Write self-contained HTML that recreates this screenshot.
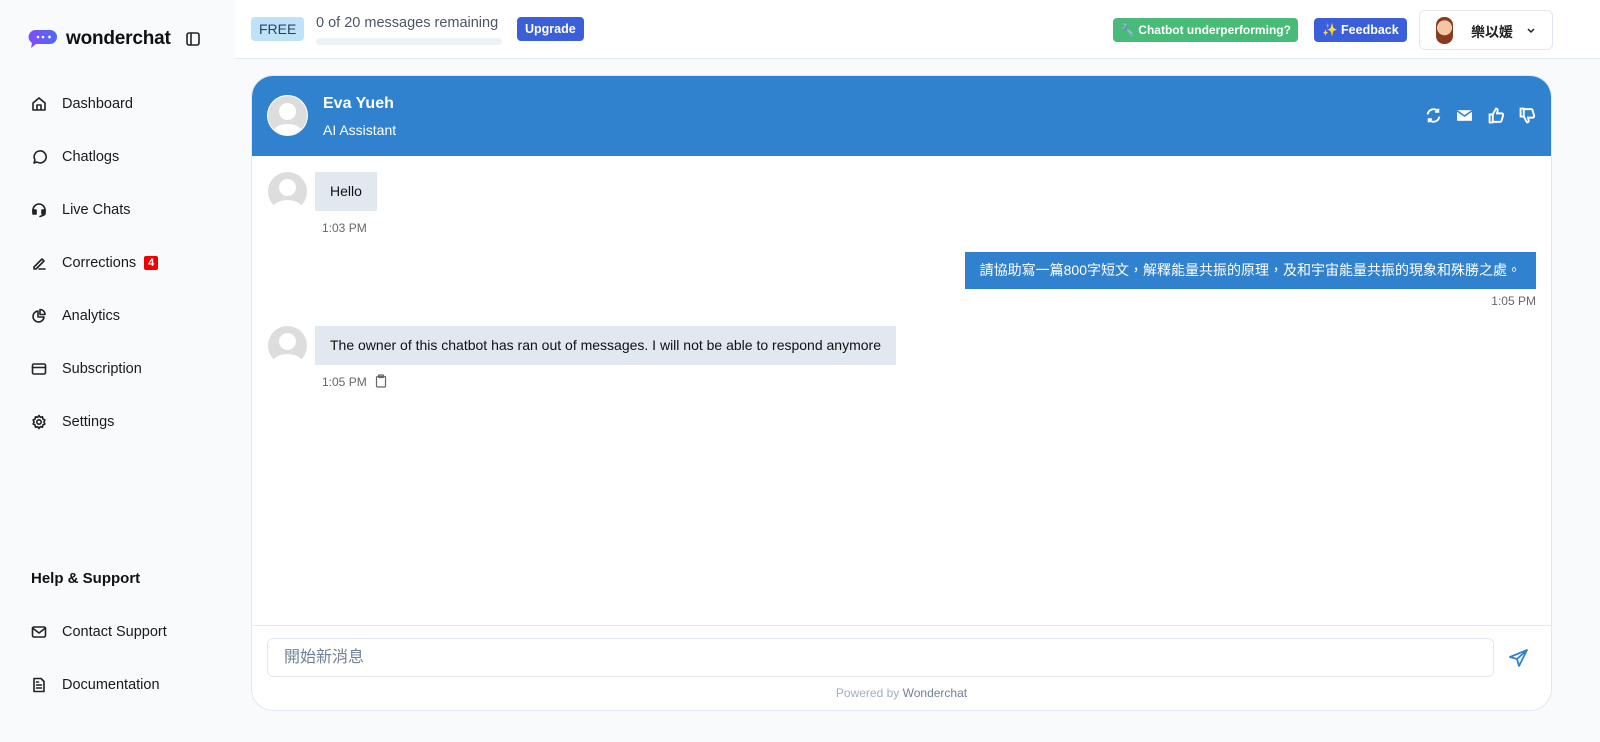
<!DOCTYPE html>
<html><head><meta charset="utf-8"><style>
*{box-sizing:border-box;margin:0;padding:0}
body{width:1600px;height:742px;overflow:hidden;font-family:"Liberation Sans","Noto Sans CJK TC",sans-serif;background:#f8fafc;position:relative;color:#111}
.side{position:absolute;left:0;top:0;width:235px;height:742px;background:#f8fafc}
.logo{position:absolute;left:28px;top:28px;display:flex;align-items:center}
.logo b{font-size:19px;margin-left:8px;color:#111;letter-spacing:-0.2px}
.nav{position:absolute;left:31px;display:flex;align-items:center;font-size:14.5px;color:#1a1a1a}
.nav svg{width:16px;height:16px;margin-right:15px;fill:none;stroke:#222;stroke-width:1.6;stroke-linecap:round;stroke-linejoin:round}
.badge{background:#e00;color:#fff;font-size:11px;font-weight:bold;padding:1px 4px;border-radius:2px;margin-left:8px}
.top{position:absolute;left:235px;top:0;width:1365px;height:59px;background:#fff;border-bottom:1px solid #e2e8f0}
.card{position:absolute;left:251px;top:75px;width:1301px;height:636px;background:#fff;border:1px solid #e2e8f0;border-radius:22px;overflow:hidden}
.hdr{height:80px;background:#3182ce;color:#fff;position:relative}
.av{position:absolute;width:39px;height:39px;border-radius:50%;background:#ddd;overflow:hidden}
.av:before{content:"";position:absolute;left:11px;top:7px;width:17px;height:17px;border-radius:50%;background:#fff}
.av:after{content:"";position:absolute;left:4px;top:28px;width:31px;height:20px;border-radius:50%;background:#fff}
.bub{position:absolute;background:#e2e8f0;font-size:14px;color:#111;padding:0 15px;height:39px;line-height:39px}
.ts{position:absolute;font-size:12px;color:#666}
.hi svg{width:17px;height:17px;fill:none;stroke:#fff;stroke-width:1.8;position:absolute;top:31px}
</style></head><body>
<div class="side">
 <div class="logo"><svg width="30" height="22" viewBox="0 0 30 22"><defs><linearGradient id="g" x1="0" x2="1"><stop offset="0" stop-color="#7c4dff"/><stop offset="1" stop-color="#4f6bf0"/></linearGradient></defs><path d="M8 2h14a7 7 0 0 1 0 14H8l-5 4 1-5A7 7 0 0 1 8 2z" fill="url(#g)"/><circle cx="10" cy="9" r="1.3" fill="#fff"/><circle cx="15" cy="9" r="1.3" fill="#fff"/><path d="M20 9h3M21.5 7.5v3" stroke="#fff" stroke-width="1.3"/></svg><b>wonderchat</b>
 <svg style="margin-left:15px" width="14" height="14" viewBox="0 0 14 14" fill="none" stroke="#222" stroke-width="1.6"><rect x="1" y="1" width="12" height="12" rx="2"/><path d="M5 1v12"/></svg></div>
 <div class="nav" style="top:96px"><svg viewBox="0 0 16 16"><path d="M2 7l6-5 6 5v7H2zM6 14V9h4v5"/></svg>Dashboard</div>
 <div class="nav" style="top:149px"><svg viewBox="0 0 16 16"><path d="M3 14l1-3a6 6 0 1 1 2 2z"/></svg>Chatlogs</div>
 <div class="nav" style="top:202px"><svg viewBox="0 0 16 16"><path d="M2 10V8a6 6 0 0 1 12 0v2"/><rect x="2" y="8" width="3" height="4" fill="#222"/><rect x="11" y="8" width="3" height="4" fill="#222"/><path d="M13 12v1l-4 1.5"/></svg>Live Chats</div>
 <div class="nav" style="top:255px"><svg viewBox="0 0 16 16"><path d="M3 12l8-8 2 2-8 8H3zM8 14h6"/></svg>Corrections<span class="badge">4</span></div>
 <div class="nav" style="top:308px"><svg viewBox="0 0 16 16"><path d="M7 3a5.5 5.5 0 1 0 6 6H7z M9 1.5v5h5a5 5 0 0 0-5-5z"/></svg>Analytics</div>
 <div class="nav" style="top:361px"><svg viewBox="0 0 16 16"><rect x="1.5" y="3" width="13" height="10" rx="1.5"/><path d="M1.5 6.5h13"/></svg>Subscription</div>
 <div class="nav" style="top:414px"><svg viewBox="0 0 16 16"><circle cx="8" cy="8" r="2.2"/><path d="M8 1.5l1.3 1.8 2.2-.5.4 2.2 2 1-1 2 1 2-2 1-.4 2.2-2.2-.5L8 14.5l-1.3-1.8-2.2.5-.4-2.2-2-1 1-2-1-2 2-1 .4-2.2 2.2.5z"/></svg>Settings</div>
 <div style="position:absolute;left:31px;top:570px;font-size:15px;font-weight:bold">Help &amp; Support</div>
 <div class="nav" style="top:624px"><svg viewBox="0 0 16 16"><rect x="1.5" y="3" width="13" height="10" rx="1.5"/><path d="M1.5 4l6.5 5 6.5-5"/></svg>Contact Support</div>
 <div class="nav" style="top:677px"><svg viewBox="0 0 16 16"><path d="M3 1.5h7l3 3v10H3zM5.5 8h5M5.5 11h5M5.5 5h2"/></svg>Documentation</div>
</div>
<div class="top">
 <div style="position:absolute;left:16px;top:17px;background:#bee3f8;color:#2a4365;font-size:14px;padding:0 8px;height:24px;line-height:24px;border-radius:4px">FREE</div>
 <div style="position:absolute;left:81px;top:15px;font-size:14.5px;color:#4a5568">0 of 20 messages remaining</div>
 <div style="position:absolute;left:81px;top:38px;width:186px;height:7px;background:#edf2f7;border-radius:4px"></div>
 <div style="position:absolute;left:282px;top:17px;background:#3b5fd9;color:#fff;font-size:12.5px;font-weight:bold;padding:0 8px;height:24px;line-height:24px;border-radius:4px">Upgrade</div>
 <div style="position:absolute;left:878px;top:18px;background:#48bb78;color:#fff;font-size:12px;font-weight:bold;padding:0 7px;height:24px;line-height:24px;border-radius:4px">🔧 Chatbot underperforming?</div>
 <div style="position:absolute;left:1079px;top:18px;background:#3b5fd9;color:#fff;font-size:12.5px;font-weight:bold;padding:0 8px;height:24px;line-height:24px;border-radius:4px">✨ Feedback</div>
 <div style="position:absolute;left:1184px;top:10px;width:134px;height:40px;border:1px solid #e2e8f0;border-radius:6px;background:#fff">
  <div style="position:absolute;left:16px;top:6px;width:17px;height:27px;border-radius:8px;background:radial-gradient(circle at 50% 40%,#f2c7a5 40%,#8a3a1e 42%)"></div>
  <div style="position:absolute;left:51px;top:11px;font-size:14px;font-weight:bold;color:#222">樂以媛</div>
  <svg style="position:absolute;left:106px;top:16px" width="10" height="8" viewBox="0 0 10 8"><path d="M2 2l3 3 3-3" stroke="#222" stroke-width="1.5" fill="none"/></svg>
 </div>
</div>
<div class="card">
 <div class="hdr">
  <div class="av" style="left:16px;top:20px;box-shadow:0 0 0 1px #fff"></div>
  <div style="position:absolute;left:71px;top:19px;font-size:16px;font-weight:bold">Eva Yueh</div>
  <div style="position:absolute;left:71px;top:46px;font-size:14px">AI Assistant</div>
  <div class="hi">
   <svg style="left:1173px" viewBox="0 0 16 16"><path d="M2.5 7a5.5 5.5 0 0 1 10-2.5M13.5 9a5.5 5.5 0 0 1-10 2.5M12.5 1.5v3h-3M3.5 14.5v-3h3"/></svg>
   <svg style="left:1204px" viewBox="0 0 16 16"><rect x="1" y="3" width="14" height="10" fill="#fff" stroke="none"/><path d="M1 3.5l7 5 7-5" stroke="#3182ce" stroke-width="1.4"/></svg>
   <svg style="left:1236px" viewBox="0 0 16 16" stroke-width="1.4"><path d="M1.5 7h3v7.5h-3zM4.5 7l3-5.5c1.5 0 2 1 1.5 2.5l-.5 2h4.5c1 0 1.5 1 1.2 2l-1.5 5c-.2.8-.8 1-1.5 1H4.5"/></svg>
   <svg style="left:1267px" viewBox="0 0 16 16" stroke-width="1.4"><path d="M1.5 9h3V1.5h-3zM4.5 9l3 5.5c1.5 0 2-1 1.5-2.5l-.5-2h4.5c1 0 1.5-1 1.2-2l-1.5-5c-.2-.8-.8-1-1.5-1H4.5"/></svg>
  </div>
 </div>
 <div class="av" style="left:16px;top:96px"></div>
 <div class="bub" style="left:63px;top:96px">Hello</div>
 <div class="ts" style="left:70px;top:145px">1:03 PM</div>
 <div class="bub" style="right:15px;top:176px;background:#3182ce;color:#fff;height:37px;line-height:37px">請協助寫一篇800字短文，解釋能量共振的原理，及和宇宙能量共振的現象和殊勝之處。</div>
 <div class="ts" style="right:15px;top:218px">1:05 PM</div>
 <div class="av" style="left:16px;top:250px"></div>
 <div class="bub" style="left:63px;top:250px">The owner of this chatbot has ran out of messages. I will not be able to respond anymore</div>
 <div class="ts" style="left:70px;top:299px">1:05 PM</div>
 <svg style="position:absolute;left:123px;top:298px" width="12" height="14" viewBox="0 0 12 14" fill="none" stroke="#666" stroke-width="1.2"><rect x="1.5" y="2.5" width="9" height="10.5" rx="1"/><rect x="3.5" y="1" width="5" height="2.5" rx=".5"/></svg>
 <div style="position:absolute;left:0;top:549px;width:100%;border-top:1px solid #e2e8f0"></div>
 <div style="position:absolute;left:15px;top:562px;width:1227px;height:39px;border:1px solid #e2e8f0;border-radius:6px;font-size:16px;color:#718096;line-height:37px;padding-left:16px">開始新消息</div>
 <svg style="position:absolute;left:1256px;top:571px" width="22" height="22" viewBox="0 0 22 22" fill="none" stroke="#3182ce" stroke-width="1.8" stroke-linejoin="round"><path d="M19 3L2 10l7 2 2 7z M9 12l10-9"/></svg>
 <div style="position:absolute;left:0;width:100%;top:610px;text-align:center;font-size:12px;color:#a0aec0">Powered by <span style="color:#718096">Wonderchat</span></div>
</div>
</body></html>
